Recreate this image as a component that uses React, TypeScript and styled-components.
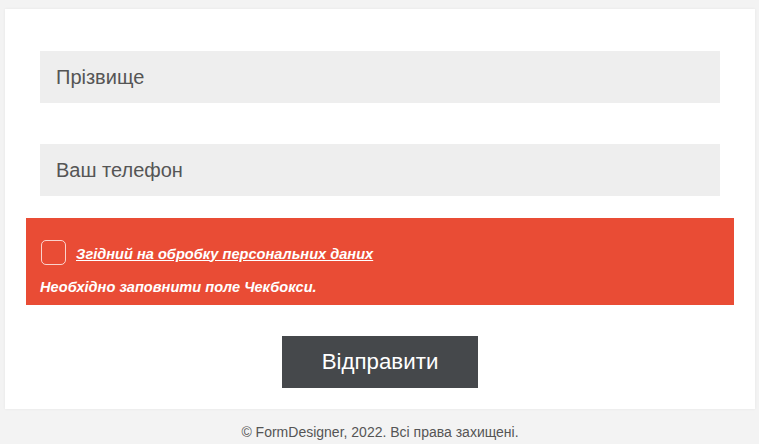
import React from "react";
import styled, { createGlobalStyle } from "styled-components";

const Global = createGlobalStyle`
  html, body { margin: 0; padding: 0; background: #f3f3f3; }
  body { font-family: "Liberation Sans", Arial, sans-serif; }
  * { box-sizing: border-box; }
`;

const Page = styled.div`
  padding: 9px 4px 0 5px;
  display: flex;
  flex-direction: column;
`;

const Card = styled.form`
  width: 750px;
  background: #fff;
  box-shadow: 0 0 3px rgba(0, 0, 0, 0.06);
  padding: 42px 21px 21px;
  display: flex;
  flex-direction: column;
`;

const Input = styled.input<{ $mt?: number }>`
  display: block;
  margin: ${(p) => p.$mt ?? 0}px 14px 0;
  width: 680px;
  height: 52px;
  border: none;
  outline: none;
  background: #eeeeee;
  padding: 0 16px;
  font-family: "Liberation Sans", Arial, sans-serif;
  font-size: 20px;
  color: #555;
  &::placeholder { color: #555; opacity: 1; }
`;

const ErrorBlock = styled.div`
  margin-top: 22px;
  background: #e94c35;
  padding: 22px 14px 10px;
  display: flex;
  flex-direction: column;
  gap: 14px;
`;

const CheckRow = styled.label`
  display: flex;
  align-items: center;
  gap: 10px;
  padding-left: 1px;
`;

const Box = styled.span`
  width: 25px;
  height: 25px;
  border: 1px solid rgba(255, 255, 255, 0.75);
  border-radius: 5px;
  flex: none;
`;

const LabelText = styled.a`
  color: #fff;
  font-weight: bold;
  font-style: italic;
  font-size: 14.6px;
  text-decoration: underline;
  margin-top: 2px;
`;

const ErrText = styled.div`
  color: #fff;
  font-weight: bold;
  font-style: italic;
  font-size: 14.6px;
  line-height: 16px;
`;

const ButtonRow = styled.div`
  display: flex;
  justify-content: center;
  margin-top: 31px;
`;

const Submit = styled.button`
  width: 196px;
  height: 52px;
  border: none;
  background: #45484b;
  color: #fff;
  font-family: "Liberation Sans", Arial, sans-serif;
  font-size: 22.3px;
  cursor: pointer;
`;

const Footer = styled.div`
  text-align: center;
  color: #555;
  font-size: 14px;
  padding-top: 15px;
`;

export default function App() {
  return (
    <>
      <Global />
      <Page>
        <Card onSubmit={(e) => e.preventDefault()}>
          <Input placeholder="Прізвище" />
          <Input $mt={41} placeholder="Ваш телефон" />
          <ErrorBlock>
            <CheckRow>
              <Box />
              <LabelText href="#">Згідний на обробку персональних даних</LabelText>
            </CheckRow>
            <ErrText>Необхідно заповнити поле Чекбокси.</ErrText>
          </ErrorBlock>
          <ButtonRow>
            <Submit type="submit">Відправити</Submit>
          </ButtonRow>
        </Card>
        <Footer>© FormDesigner, 2022. Всі права захищені.</Footer>
      </Page>
    </>
  );
}
